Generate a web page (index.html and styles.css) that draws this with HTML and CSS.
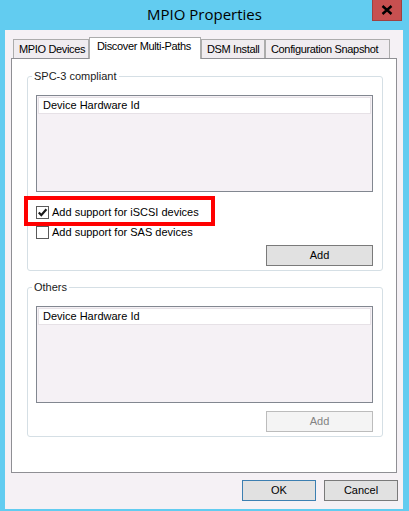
FILE: index.html
```html
<!DOCTYPE html>
<html>
<head>
<meta charset="utf-8">
<link rel="stylesheet" href="styles.css">
</head>
<body>
<div class="window">
  <div class="titlebar">
    <div class="title">MPIO Properties</div>
    <div class="close">
      <svg width="12" height="10" viewBox="0 0 12 10"><path d="M1.5 1 L10.5 9 M10.5 1 L1.5 9" stroke="#000" stroke-width="2.4" fill="none"/></svg>
    </div>
  </div>
  <div class="client">
    <div class="tabs">
      <div class="tab t1">MPIO Devices</div>
      <div class="tab t2 active">Discover Multi-Paths</div>
      <div class="tab t3">DSM Install</div>
      <div class="tab t4">Configuration Snapshot</div>
    </div>
    <div class="panel">
      <fieldset class="group">
        <legend>SPC-3 compliant</legend>
        <div class="listbox"><div class="lhead">Device Hardware Id</div></div>
        <div class="checks">
          <div class="highlight"></div>
          <div class="check">
            <span class="box"><svg width="11" height="11" viewBox="0 0 11 11"><path d="M1.8 5.6 L4.3 8.2 L9.4 2.2" stroke="#1a1a1a" stroke-width="2.2" fill="none"/></svg></span>
            <span>Add support for iSCSI devices</span>
          </div>
          <div class="check">
            <span class="box"></span>
            <span>Add support for SAS devices</span>
          </div>
        </div>
        <div class="btnrow"><div class="btn">Add</div></div>
      </fieldset>
      <fieldset class="group g2">
        <legend>Others</legend>
        <div class="listbox"><div class="lhead">Device Hardware Id</div></div>
        <div class="btnrow b2"><div class="btn disabled">Add</div></div>
      </fieldset>
    </div>
    <div class="footer">
      <div class="btn dlg default">OK</div>
      <div class="btn dlg">Cancel</div>
    </div>
  </div>
</div>
</body>
</html>
```

FILE: styles.css
```css
* { box-sizing: border-box; }
html, body { margin: 0; padding: 0; }
body {
  background: #62ccf0;
  font-family: "Liberation Sans", Arial, sans-serif;
  font-size: 11px;
  color: #000;
  width: 409px;
  height: 511px;
  overflow: hidden;
}
.window { width: 409px; height: 511px; display: flex; flex-direction: column; }
.titlebar {
  height: 30px;
  display: grid;
  grid-template-columns: 1fr;
  position: relative;
}
.title {
  font-family: "Open Sans", "Noto Sans", sans-serif;
  font-size: 15px;
  text-align: center;
  line-height: 28px;
  color: #000;
}
.close {
  position: absolute;
  right: 7px;
  top: 0;
  width: 30px;
  height: 21px;
  background: #c75050;
  border: 1px solid #a04040;
  border-top: none;
  display: flex;
  align-items: center;
  justify-content: center;
}
.client {
  margin: 0 6px 2px 5px;
  height: 479px;
  background: #f5f1f5;
  padding: 7px 5px 8px 6px;
  display: flex;
  flex-direction: column;
}
.tabs {
  display: flex;
  align-items: flex-end;
  height: 21px;
  padding-left: 2px;
}
.tab {
  height: 19px;
  border: 1px solid #acacac;
  border-bottom: none;
  background: #f0ecf0;
  padding: 2px 0 0 5px;
  line-height: 14px;
  white-space: nowrap;
  letter-spacing: -0.35px;
  overflow: hidden;
}
.t1 { width: 76px; }
.t2 { width: 112px; }
.t3 { width: 64px; }
.t4 { width: 125px; }
.tab.active {
  height: 22px;
  margin-bottom: -1px;
  background: #fff;
  position: relative;
  padding: 1px 0 0 7px;
}
.panel {
  width: 386px;
  height: 415px;
  border: 1px solid #8f8f94;
  background: #fff;
  padding: 10px 13px 0 15px;
}
.group {
  margin: 0;
  border: 1px solid #d5dfe5;
  border-radius: 3px;
  padding: 12px 9px 4px 8px;
}
.group legend {
  margin-left: -4px;
  padding: 0 2px;
  line-height: 14px;
  color: #1a1a1a;
}
.g2 { margin-top: 9px; }
.listbox {
  height: 97px;
  border: 1px solid #828790;
  background: #f5f1f5;
  padding: 1px;
}
.lhead {
  height: 17px;
  background: #fff;
  border: 1px solid #e6e1e6;
  padding-left: 4px;
  line-height: 15px;
}
.checks {
  margin-top: 10px;
  position: relative;
}
.highlight {
  position: absolute;
  left: -12px;
  top: -6px;
  width: 191px;
  height: 30px;
  border: 4px solid #ff0000;
}
.check {
  height: 20px;
  display: flex;
  align-items: center;
  gap: 3px;
}
.box {
  width: 13px;
  height: 13px;
  border: 1px solid #5a5a5a;
  background: #fff;
  display: flex;
  align-items: center;
  justify-content: center;
}
.btnrow {
  display: flex;
  justify-content: flex-end;
  margin-top: 3px;
}
.b2 { margin-top: 8px; }
.btn {
  width: 107px;
  height: 21px;
  background: #e1e1e1;
  border: 1px solid #7a7a7a;
  text-align: center;
  line-height: 19px;
}
.btn.disabled {
  background: #f4f4f4;
  border-color: #bcbcbc;
  color: #838383;
}
.footer {
  margin-top: 7px;
  display: flex;
  justify-content: flex-end;
  gap: 8px;
}
.btn.dlg { width: 74px; }
.btn.default { border-color: #3c7fb1; }
```
